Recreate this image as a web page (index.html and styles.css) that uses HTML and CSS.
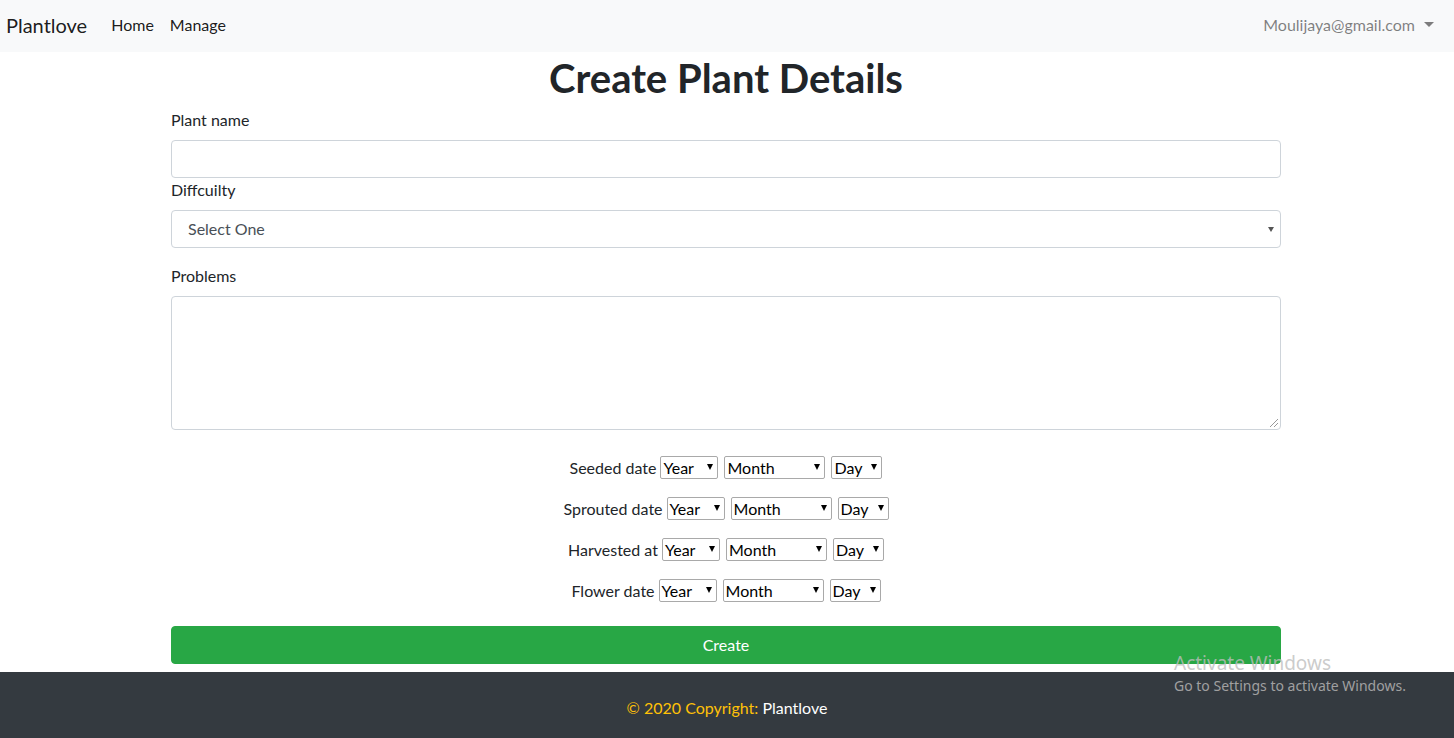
FILE: index.html
```html
<!DOCTYPE html>
<html>
<head>
<meta charset="utf-8">
<title>Create Plant Details</title>
<link rel="stylesheet" href="styles.css">
</head>
<body>
<nav class="navbar">
  <div class="nav-left">
    <a class="brand" href="#">Plantlove</a>
    <a class="nav-link" href="#">Home</a>
    <a class="nav-link" href="#">Manage</a>
  </div>
  <div class="nav-right">
    <a class="user" href="#">Moulijaya@gmail.com<span class="caret"></span></a>
  </div>
</nav>
<main class="container">
  <h1 class="title">Create Plant Details</h1>
  <form class="form">
    <label class="label">Plant name</label>
    <input class="control" type="text">
    <label class="label">Diffcuilty</label>
    <div class="select-wrap">
      <div class="control select">Select One</div>
      <span class="select-arrow"></span>
    </div>
    <label class="label problems-label">Problems</label>
    <div class="control textarea"><span class="grip"></span></div>

    <div class="dates">
      <div class="date-row"><span class="dl">Seeded date</span><span class="ds w-year">Year</span><span class="ds w-month">Month</span><span class="ds w-day">Day</span></div>
      <div class="date-row"><span class="dl">Sprouted date</span><span class="ds w-year">Year</span><span class="ds w-month">Month</span><span class="ds w-day">Day</span></div>
      <div class="date-row"><span class="dl">Harvested at</span><span class="ds w-year">Year</span><span class="ds w-month">Month</span><span class="ds w-day">Day</span></div>
      <div class="date-row"><span class="dl">Flower date</span><span class="ds w-year">Year</span><span class="ds w-month">Month</span><span class="ds w-day">Day</span></div>
    </div>
    <button class="btn" type="button">Create</button>
  </form>
</main>
<footer class="footer">
  <span class="copy">© 2020 Copyright:</span> <span class="fbrand">Plantlove</span>
</footer>
<div class="watermark">
  <div class="wm1">Activate Windows</div>
  <div class="wm2">Go to Settings to activate Windows.</div>
</div>
</body>
</html>
```
FILE: styles.css
```css
* { box-sizing: border-box; }
html, body { margin: 0; padding: 0; }
body {
  font-family: Lato, "Noto Sans", sans-serif;
  font-size: 16px;
  line-height: 24px;
  color: #212529;
  background: #fff;
  width: 1454px;
  height: 738px;
  overflow: hidden;
  position: relative;
}
a { text-decoration: none; }

.navbar {
  height: 52px;
  background: #f8f9fa;
  display: flex;
  align-items: center;
  justify-content: space-between;
  padding: 0 12px 3px 6px;
}
.nav-left { display: flex; align-items: center; }
.brand { font-size: 20px; color: rgba(0,0,0,.9); margin-right: 16px; line-height: 30px; }
.nav-link { color: rgba(0,0,0,.9); padding: 8px 8px; font-size: 16px; }
.user { color: rgba(0,0,0,.5); padding: 8px; display: flex; align-items: center; }
.caret {
  display: inline-block;
  margin-left: 9px;
  border-top: 5px solid rgba(0,0,0,.5);
  border-left: 5px solid transparent;
  border-right: 5px solid transparent;
  width: 0; height: 0;
}

.container { width: 1140px; margin: 0 auto; padding: 0 16px 0 14px; }
.title {
  margin: 0 0 8px;
  font-size: 40px;
  line-height: 48px;
  font-weight: 700;
  text-align: center;
  padding-top: 2px;
  height: 48px;
}
.form { display: flex; flex-direction: column; }
.label { display: block; margin-bottom: 8px; }
.control {
  display: block;
  width: 100%;
  height: 38px;
  border: 1px solid #ced4da;
  border-radius: 4px;
  background: #fff;
  padding: 6px 12px;
  font: inherit;
  color: #495057;
}
.select-wrap { position: relative; margin-bottom: 16px; }
.select { padding-left: 16px; }
.select-arrow {
  position: absolute;
  right: 7px; top: 17px;
  border-top: 5px solid #555;
  border-left: 3px solid transparent;
  border-right: 3px solid transparent;
  width: 0; height: 0;
}
.textarea { height: 134px; position: relative; }
.grip {
  position: absolute; right: 2px; bottom: 2px;
  width: 8px; height: 8px;
  background: linear-gradient(135deg, transparent 45%, #999 45%, #999 55%, transparent 55%, transparent 70%, #999 70%, #999 80%, transparent 80%);
}

.dates { display: flex; flex-direction: column; align-items: center; gap: 18px; margin-top: 26px; }
.date-row { display: flex; align-items: center; height: 23px; }
.dl { margin-right: 4px; }
.ds {
  position: relative;
  height: 23px;
  border: 1px solid #a9a9a9;
  border-radius: 2px;
  padding: 0 2px;
  line-height: 21px;
  color: #000;
  margin-right: 6px;
}
.ds:last-child { margin-right: 0; }
.ds::after {
  content: "";
  position: absolute;
  right: 4px; top: 7px;
  border-top: 6px solid #000;
  border-left: 3px solid transparent;
  border-right: 3px solid transparent;
}
.w-year { width: 58px; }
.w-month { width: 101px; }
.w-day { width: 51px; }

.btn {
  margin-top: 24px;
  height: 38px;
  width: 100%;
  background: #28a745;
  border: 1px solid #28a745;
  border-radius: 4px;
  color: #fff;
  font: inherit;
}

.footer {
  position: absolute;
  left: 0; right: 0; bottom: 0;
  height: 66px;
  background: #343a40;
  text-align: center;
  padding-top: 24px;
}
.copy { color: #ffc107; }
.fbrand { color: #fff; }

.watermark {
  position: absolute;
  left: 1174px; top: 651px;
  font-family: "Noto Sans", sans-serif;
}
.wm1 { font-size: 19px; line-height: 24px; color: rgba(190,190,190,.8); }
.wm2 { font-size: 14px; line-height: 22px; color: #a0a0a0; }
```
